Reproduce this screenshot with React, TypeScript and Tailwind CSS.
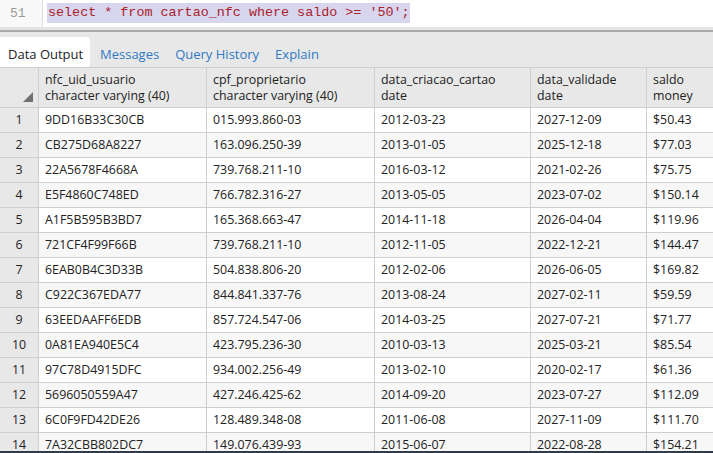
import React from "react";

const rows = [
  ["9DD16B33C30CB", "015.993.860-03", "2012-03-23", "2027-12-09", "$50.43"],
  ["CB275D68A8227", "163.096.250-39", "2013-01-05", "2025-12-18", "$77.03"],
  ["22A5678F4668A", "739.768.211-10", "2016-03-12", "2021-02-26", "$75.75"],
  ["E5F4860C748ED", "766.782.316-27", "2013-05-05", "2023-07-02", "$150.14"],
  ["A1F5B595B3BD7", "165.368.663-47", "2014-11-18", "2026-04-04", "$119.96"],
  ["721CF4F99F66B", "739.768.211-10", "2012-11-05", "2022-12-21", "$144.47"],
  ["6EAB0B4C3D33B", "504.838.806-20", "2012-02-06", "2026-06-05", "$169.82"],
  ["C922C367EDA77", "844.841.337-76", "2013-08-24", "2027-02-11", "$59.59"],
  ["63EEDAAFF6EDB", "857.724.547-06", "2014-03-25", "2027-07-21", "$71.77"],
  ["0A81EA940E5C4", "423.795.236-30", "2010-03-13", "2025-03-21", "$85.54"],
  ["97C78D4915DFC", "934.002.256-49", "2013-02-10", "2020-02-17", "$61.36"],
  ["5696050559A47", "427.246.425-62", "2014-09-20", "2023-07-27", "$112.09"],
  ["6C0F9FD42DE26", "128.489.348-08", "2011-06-08", "2027-11-09", "$111.70"],
  ["7A32CBB802DC7", "149.076.439-93", "2015-06-07", "2022-08-28", "$154.21"],
];

// widths include the right border of each cell
const widths = ["w-[168px]", "w-[168px]", "w-[156px]", "w-[116px]", "w-[80px]"];

const columns = [
  { name: "nfc_uid_usuario", type: "character varying (40)" },
  { name: "cpf_proprietario", type: "character varying (40)" },
  { name: "data_criacao_cartao", type: "date" },
  { name: "data_validade", type: "date" },
  { name: "saldo", type: "money" },
];

export default function App() {
  return (
    <div className="w-[713px] h-[453px] overflow-hidden bg-white flex flex-col font-['Open_Sans',sans-serif] relative">
      {/* editor line */}
      <div className="h-[27px] flex bg-white shrink-0">
        <div className="w-[43px] border-r border-[#dddddd] bg-[#f9f9f9] text-[#999999] font-['Liberation_Mono',monospace] text-[13px] pl-[10px] pt-[4px]">
          51
        </div>
        <div className="pl-[4px] pt-[3px]">
          <span className="bg-[#d8d5ef] text-[#a8222a] font-['Liberation_Mono',monospace] text-[13.4px] leading-[20px] block pl-[1px]">
            select * from cartao_nfc where saldo &gt;= '50';
          </span>
        </div>
      </div>
      <div className="h-[3px] bg-[#e4e4e4] border-b-2 border-[#aaaaaa] shrink-0 box-content" />

      {/* tabs */}
      <div className="h-[35px] bg-[#e8e8e8] flex items-end text-[13px] shrink-0">
        <div className="h-[30px] w-[90px] bg-white rounded-tr-[4px] flex items-center pl-[8px] pt-[6px] text-[#222222]">
          Data Output
        </div>
        <div className="h-[30px] flex items-center gap-[16px] pl-[10px] pt-[6px] text-[#3079c3]">
          <span>Messages</span>
          <span>Query History</span>
          <span>Explain</span>
        </div>
      </div>

      {/* grid */}
      <div className="text-[12.4px] text-[#222222] border-t border-[#cfcfcf]">
        <div className="flex h-[40px] bg-[#e8e8e8] border-b border-[#cfcfcf]">
          <div className="w-[39px] shrink-0 border-r border-[#cfcfcf] relative">
            <span className="absolute right-[5px] bottom-[5px] w-0 h-0 border-l-[10px] border-l-transparent border-b-[10px] border-b-[#707070]" />
          </div>
          {columns.map((c, j) => (
            <div
              key={c.name}
              className={`${widths[j]} shrink-0 border-r border-[#cfcfcf] px-[6px] leading-[16px] flex flex-col justify-center whitespace-nowrap`}
            >
              <div>{c.name}</div>
              <div>{c.type}</div>
            </div>
          ))}
        </div>
        {rows.map((r, i) => (
          <div
            key={i}
            className={`flex h-[25px] border-b border-[#cfcfcf] ${i % 2 === 1 ? "bg-[#f7f7f7]" : "bg-white"}`}
          >
            <div className="w-[39px] shrink-0 border-r border-[#cfcfcf] bg-[#e8e8e8] flex items-center justify-center">
              {i + 1}
            </div>
            {r.map((v, j) => (
              <div
                key={j}
                className={`${widths[j]} shrink-0 border-r border-[#cfcfcf] px-[6px] flex items-center whitespace-nowrap`}
              >
                {v}
              </div>
            ))}
          </div>
        ))}
      </div>
      <div className="absolute left-0 right-0 bottom-0 h-[2px] bg-[#2f3b48]" />
    </div>
  );
}
